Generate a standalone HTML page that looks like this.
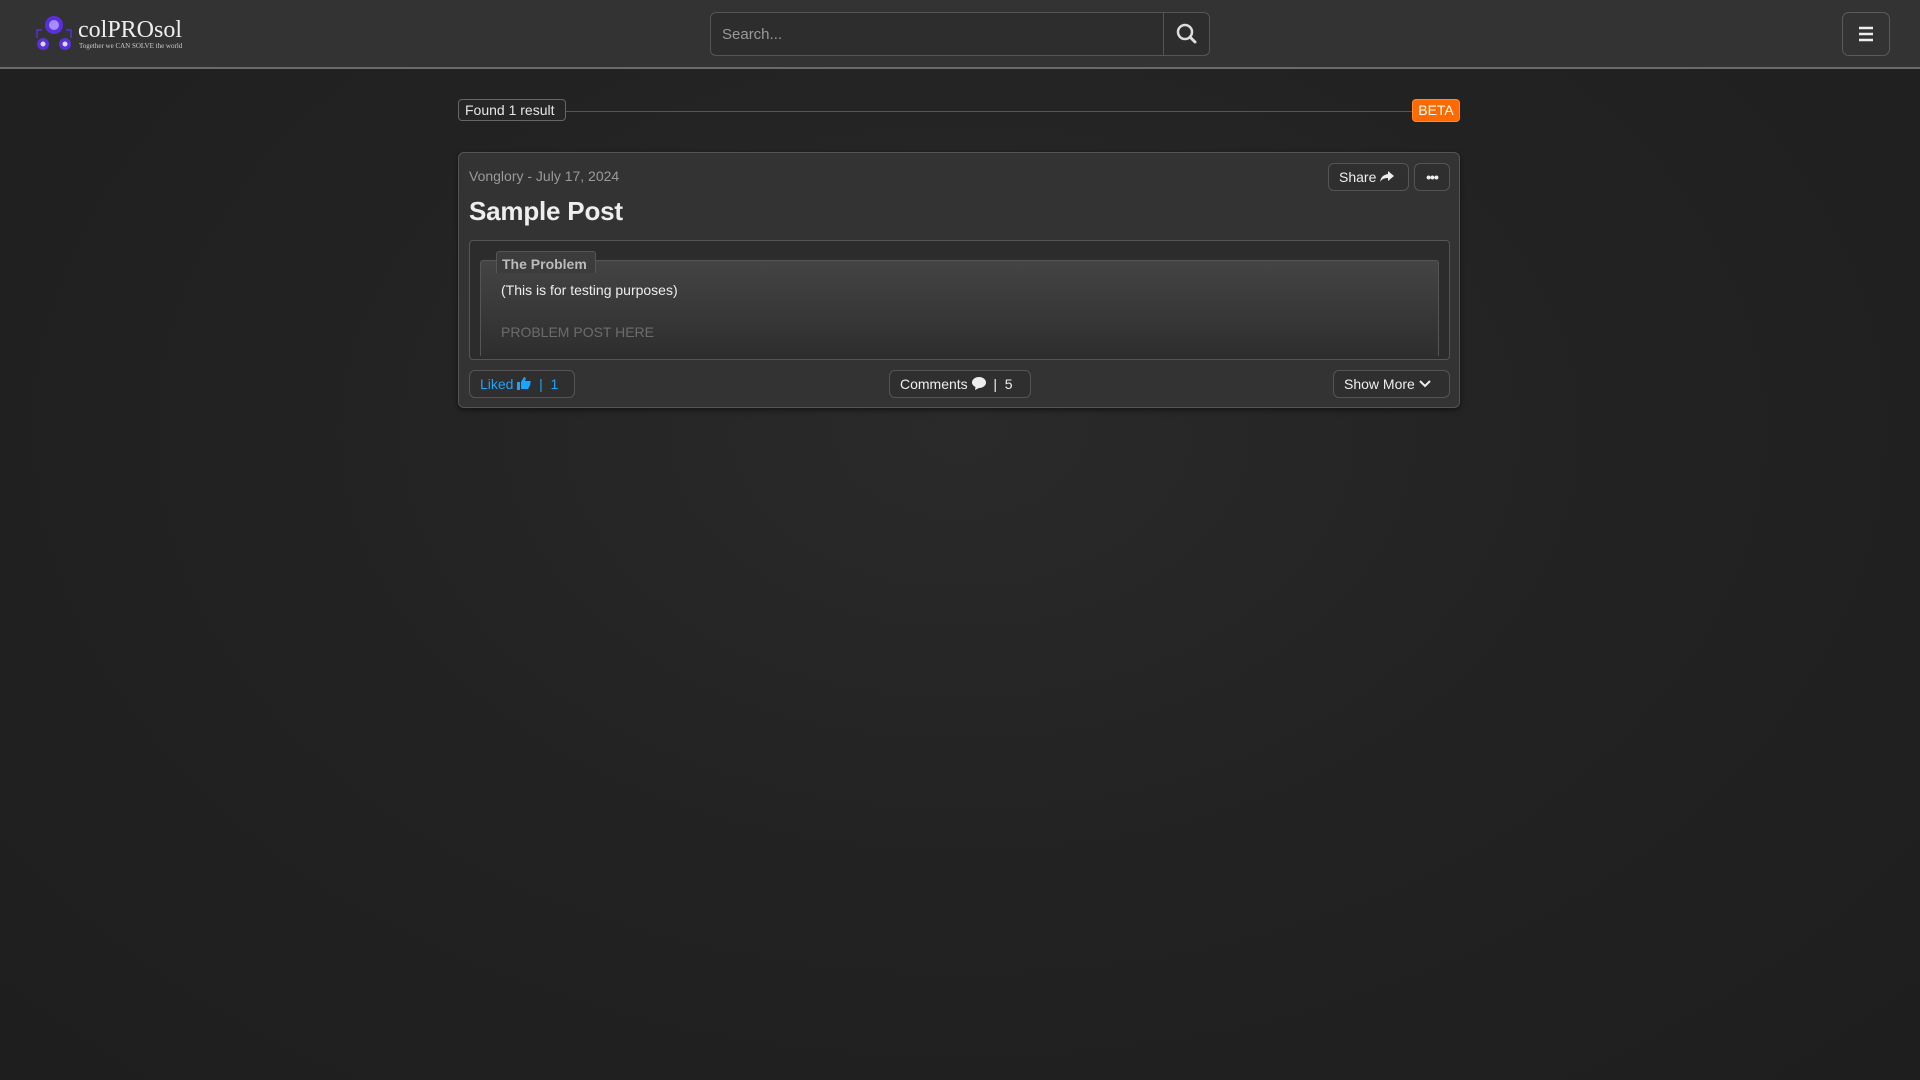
<!DOCTYPE html>
<html><head><meta charset="utf-8"><style>
*{box-sizing:border-box;margin:0;padding:0}
body{width:1920px;height:1080px;overflow:hidden;background:radial-gradient(ellipse at 50% 40%,#2a2a2a 0%,#222 50%,#1e1e1e 100%);font-family:"Liberation Sans",Arial,sans-serif;color:#e6e6e6;position:relative}
.hdr{position:absolute;left:0;top:0;width:1920px;height:69px;background:#333;border-bottom:2px solid #6a6a6a}
.abs{position:absolute}
.search{left:710px;top:12px;width:500px;height:44px;border:1px solid #555;border-radius:6px;background:#2d2d2d}
.search span{position:absolute;left:11px;top:13px;font-size:15px;color:#9a9a9a}
.search .btn{position:absolute;right:0;top:0;width:46px;height:42px;border-left:1px solid #555}
.menu{left:1842px;top:12px;width:48px;height:44px;border:1px solid #5a5a5a;border-radius:7px}
.badge{border:1px solid #666;border-radius:4px;font-size:14px;padding:0 6px;line-height:20px;background:#262626}
.card{left:458px;top:152px;width:1002px;height:256px;background:#333;border:1px solid #555;border-radius:6px;box-shadow:0 2px 6px rgba(0,0,0,.5)}
.b{border:1px solid #555;border-radius:6px;height:28px;font-size:14px;line-height:26px;padding:0 10px;color:#eee;background:#2f2f2f}
</style></head><body>
<div class="hdr">
 <svg class="abs" style="left:34px;top:14px" width="40" height="40" viewBox="0 0 40 40">
  <circle cx="20" cy="11" r="9" fill="#5b2ee0"/><circle cx="20" cy="11" r="5" fill="#a58cff"/>
  <circle cx="9" cy="30" r="6" fill="#5b2ee0"/><circle cx="9" cy="30" r="2.5" fill="#ddd"/>
  <circle cx="31" cy="30" r="6" fill="#5b2ee0"/><circle cx="31" cy="30" r="2.5" fill="#ddd"/>
  <path d="M3 24 V16 H8 M37 24 V16 H32" stroke="#5b2ee0" stroke-width="1.5" fill="none"/>
 </svg>
 <div class="abs" style="left:78px;top:17px;font-family:'Liberation Serif',serif;font-size:24px;color:#eee">colPROsol</div>
 <div class="abs" style="left:79px;top:42px;font-family:'Liberation Serif',serif;font-size:7px;color:#ccc">Together we CAN SOLVE the world</div>
 <div class="abs search"><span>Search...</span><div class="btn"><svg width="46" height="42" viewBox="0 0 46 42"><circle cx="21" cy="19" r="7" stroke="#ddd" stroke-width="2.5" fill="none"/><path d="M26 24 L31 29" stroke="#ddd" stroke-width="3" stroke-linecap="round"/></svg></div></div>
 <div class="abs menu"><svg width="46" height="42" viewBox="0 0 46 42"><path d="M16 15H30M16 21H30M16 27H30" stroke="#eee" stroke-width="2.5"/></svg></div>
</div>
<div class="abs" style="left:566px;top:111px;width:846px;border-top:1px solid #555"></div>
<div class="abs badge" style="left:458px;top:99px;width:108px">Found 1 result</div>
<div class="abs badge" style="left:1412px;top:99px;background:#ff6a00;border-color:#ff8a30;color:#fff;width:48px;text-align:center;padding:0;height:23px">BETA</div>
<div class="abs card">
 <div class="abs" style="left:10px;top:15px;font-size:14px;color:#9a9a9a">Vonglory - July 17, 2024</div>
 <div class="abs b" style="left:869px;top:10px;width:81px;padding:0 0 0 10px">Share <svg width="14" height="12" viewBox="0 0 14 12" style="vertical-align:-1px"><path d="M8 0 L14 5 L8 10 V7 C4 7 2 8 0 11 C1 6 3 4 8 3Z" fill="#eee"/></svg></div>
 <div class="abs b" style="left:955px;top:10px;width:36px;padding:0;text-align:center;font-weight:bold;letter-spacing:-1px">•••</div>
 <div class="abs" style="left:10px;top:43px;font-size:26px;font-weight:bold;color:#eee;letter-spacing:-0.2px">Sample Post</div>
 <div class="abs" style="left:10px;top:87px;width:981px;height:120px;border:1px solid #555;border-radius:4px;background:#2c2c2c">
  <div class="abs" style="left:10px;top:19px;width:959px;height:96px;border:1px solid #555;border-bottom:none;border-radius:3px 3px 0 0;background:linear-gradient(#444,#2e2e2e)"></div>
  <div class="abs" style="left:26px;top:10px;width:100px;height:22px;border:1px solid #555;border-bottom:none;border-radius:3px 3px 0 0;background:#3c3c3c;font-size:14px;font-weight:bold;color:#bbb;padding:4px 0 0 5px">The Problem</div>
  <div class="abs" style="left:31px;top:41px;font-size:14px;color:#eee">(This is for testing purposes)</div>
  <div class="abs" style="left:31px;top:83px;font-size:14px;color:#6c6c6c">PROBLEM POST HERE</div>
 </div>
 <div class="abs b" style="left:10px;top:217px;width:106px;color:#1aa3ff">Liked <svg width="14" height="13" viewBox="0 0 14 13" style="vertical-align:-1px"><path d="M0 5H3V13H0Z M4 5 L7 0 C9 0 9 2 8 4 H13 C14 4 14 6 13 6 C14 7 13 8 13 8 C13 9 12 10 12 10 C12 11 11 12 11 12 H4Z" fill="#1aa3ff"/></svg> &nbsp;| &nbsp;1</div>
 <div class="abs b" style="left:430px;top:217px;width:142px">Comments <svg width="14" height="13" viewBox="0 0 14 13" style="vertical-align:-1px"><path d="M7 0C11 0 14 2.5 14 5.5S11 11 7 11L3 13 3.5 10C1.5 9 0 7.5 0 5.5 0 2.5 3 0 7 0Z" fill="#eee"/></svg> &nbsp;| &nbsp;5</div>
 <div class="abs b" style="left:874px;top:217px;width:117px">Show More <svg width="12" height="10" viewBox="0 0 12 10"><path d="M1 2L6 7 11 2" stroke="#eee" stroke-width="2" fill="none"/></svg></div>
</div>
</body></html>
